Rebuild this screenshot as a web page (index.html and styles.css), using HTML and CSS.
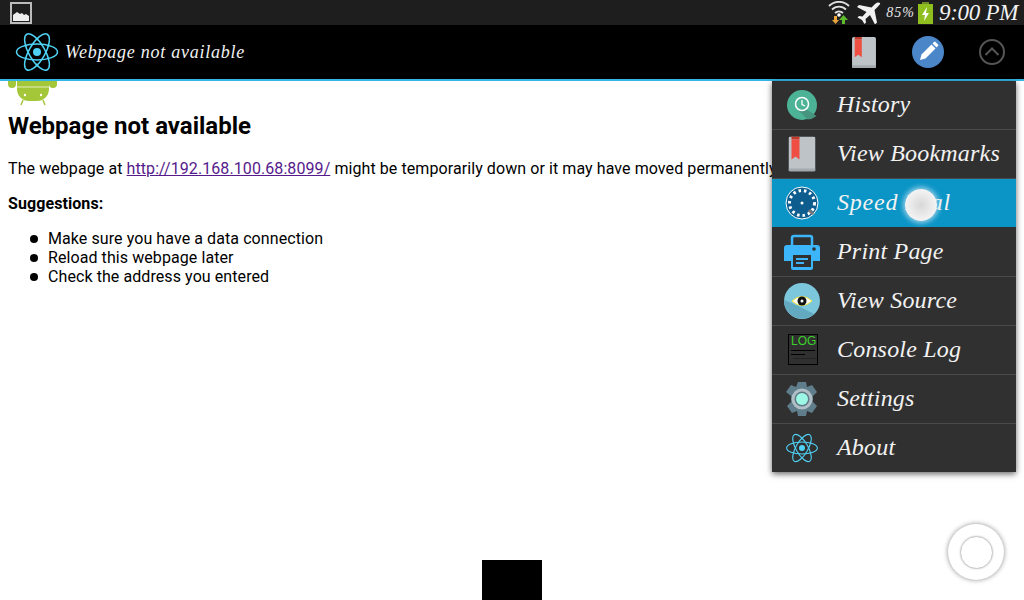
FILE: index.html
```html
<!DOCTYPE html>
<html lang="en">
<head>
<meta charset="utf-8">
<title>Webpage not available</title>
<link rel="stylesheet" href="styles.css">
</head>
<body>
<svg class="defs" width="0" height="0" aria-hidden="true">
  <symbol id="atom" viewBox="0 0 44 40">
    <g fill="none" stroke="#4fd2f5" stroke-width="1.5">
      <ellipse cx="22" cy="20" rx="20.5" ry="8"/>
      <ellipse cx="22" cy="20" rx="20.5" ry="8" transform="rotate(60 22 20)"/>
      <ellipse cx="22" cy="20" rx="20.5" ry="8" transform="rotate(120 22 20)"/>
    </g>
    <circle cx="22" cy="20" r="4" fill="#4fd2f5"/>
  </symbol>
  <symbol id="book" viewBox="0 0 27 35">
    <rect x="0" y="0" width="27" height="35" rx="2" fill="#bdc3c7"/>
    <rect x="0" y="32" width="27" height="3" rx="1" fill="#a3a9ad"/>
    <path d="M3 0h8v3H3z" fill="#c0392b"/>
    <path d="M3 3h8v20l-4-3-4 3z" fill="#ef4f42"/>
  </symbol>
</svg>

<header class="status">
  <svg class="pic" width="22" height="22" viewBox="0 0 22 22"><rect x="1" y="1" width="20" height="20" fill="none" stroke="#bbb" stroke-width="2"/><path d="M3 19v-6l4-3 3 2 2-1 2 2 2-1 3 2v5z" fill="#eee"/></svg>
  <span class="spring"></span>
  <svg width="22" height="24" viewBox="0 0 22 24"><g fill="none" stroke="#e0e0e0" stroke-width="1.800"><path d="M1 5a14 14 0 0 1 20 0"/><path d="M4 8.500a10 10 0 0 1 14 0"/><path d="M7 12a6 6 0 0 1 8 0"/></g><circle cx="11" cy="14" r="1.800" fill="#fff"/><path d="M6 15h3v4h2l-3.500 4L4 19h2z" fill="#e8a33b"/><path d="M14 19h3v4h-3zM15.500 14L20 19h-9z" fill="#5dbb2c"/></svg>
  <svg class="plane" width="25" height="22" viewBox="0 0 25 22"><path d="M24 1c-1.500-1-3.500-.5-5 1l-3.500 3.500L3 3 1 5l9.500 5-4 4.500L3 14l-1.500 1.500 4.500 2.500 2.500 4L10 20.500 9.500 17l4.500-4 5 9.500 2-2L18.500 8 22 4.500c1.500-1.500 2.500-2.500 2-3.500z" fill="#f2f2f2"/></svg>
  <span class="pct">85%</span>
  <svg class="batt" width="15" height="22" viewBox="0 0 15 22"><rect x="4" y="0" width="7" height="3" fill="#6f8f2a"/><rect y="2" width="15" height="20" fill="#8fbf1f"/><path d="M9 5L4 13h3l-1 6 5-8H8z" fill="#fff"/></svg>
  <span class="clock">9:00 PM</span>
</header>

<nav class="bar">
  <svg class="bar-logo" width="44" height="40"><use href="#atom"/></svg>
  <span class="bar-title">Webpage not available</span>
  <span class="spring"></span>
  <svg class="bar-book" width="24" height="31"><use href="#book"/></svg>
  <svg class="bar-pen" width="32" height="32" viewBox="0 0 32 32"><circle cx="16" cy="16" r="16" fill="#4a86c8"/><path d="M8 24l1.500-5.500L19.500 8.500l4 4-10 10z" fill="#fff"/><path d="M20.500 7.500l1.500-1.500a1 1 0 0 1 1.500 0l2.500 2.500a1 1 0 0 1 0 1.500l-1.500 1.500z" fill="#fff"/></svg>
  <svg class="bar-up" width="26" height="26" viewBox="0 0 26 26"><circle cx="13" cy="13" r="12" fill="none" stroke="#555" stroke-width="2"/><path d="M6.500 16L13 9.500 19.500 16" fill="none" stroke="#555" stroke-width="2"/></svg>
</nav>

<main class="page">
  <svg class="droid" width="50" height="25" viewBox="0 0 50 25">
    <path d="M0 0h8v3a4 4 0 0 1-8 0zM41 0h8v3a4 4 0 0 1-8 0z" fill="#a4c639"/>
    <path d="M9 0h32v8a12 12 0 0 1-12 12h-8a12 12 0 0 1-12-12z" fill="#a4c639"/>
    <path d="M9 6h32" stroke="#e4eec0" stroke-width="1"/>
    <path d="M15 19l-2 5M35 19l2 5" stroke="#a4c639" stroke-width="1.500"/>
    <circle cx="17" cy="14" r="1.200" fill="#fff"/><circle cx="33" cy="14" r="1.200" fill="#fff"/>
  </svg>
  <h1>Webpage not available</h1>
  <p>The webpage at <a href="#">http://192.168.100.68:8099/</a> might be temporarily down or it may have moved permanently</p>
  <p><b>Suggestions:</b></p>
  <ul>
    <li>Make sure you have a data connection</li>
    <li>Reload this webpage later</li>
    <li>Check the address you entered</li>
  </ul>
</main>

<div class="menu">
  <div class="row">
    <svg class="ico" width="32" height="32" viewBox="0 0 32 32"><circle cx="16" cy="16" r="15" fill="#4db397"/><path d="M20 20l10.500 7a15 15 0 0 1-9 3.500L12 21z" fill="#46957f"/><circle cx="16" cy="15" r="6.500" fill="none" stroke="#fff" stroke-width="1.500"/><path d="M16 11v4.500l3 1.500" fill="none" stroke="#fff" stroke-width="1.300"/></svg>
    <span>History</span>
  </div>
  <div class="row">
    <svg class="ico" width="27" height="35"><use href="#book"/></svg>
    <span>View Bookmarks</span>
  </div>
  <div class="row on">
    <svg class="ico" width="34" height="34" viewBox="0 0 34 34"><circle cx="17" cy="17" r="16" fill="#0d5d8f" stroke="#fff" stroke-width="1"/><circle cx="17" cy="17" r="12.500" fill="none" stroke="#fff" stroke-width="3" stroke-dasharray="2.500 3"/><circle cx="17" cy="17" r="1.500" fill="#fff"/><path d="M24 24l4 4" stroke="#777" stroke-width="3"/></svg>
    <span>Speed Dial</span>
  </div>
  <div class="row">
    <svg class="ico" width="36" height="36" viewBox="0 0 36 36"><path d="M8 12V4a2 2 0 0 1 2-2h16a2 2 0 0 1 2 2v8" fill="none" stroke="#3db5fb" stroke-width="2.500"/><path d="M3 11h30a3 3 0 0 1 3 3v13h-7v7a2 2 0 0 1-2 2H9a2 2 0 0 1-2-2v-7H0V14a3 3 0 0 1 3-3z" fill="#3db5fb"/><rect x="9" y="21" width="18" height="12" fill="#303030"/><path d="M12 25h12M12 29h8" stroke="#3db5fb" stroke-width="2"/><circle cx="30" cy="15" r="1.800" fill="#303030"/></svg>
    <span>Print Page</span>
  </div>
  <div class="row">
    <svg class="ico" width="36" height="36" viewBox="0 0 36 36"><circle cx="18" cy="18" r="18" fill="#7dc7dc"/><path d="M12 22L0.200 17a18 18 0 0 0 30 14z" fill="#63a9bf"/><path d="M8 18q10-9 20 0q-10 9-20 0z" fill="#fff" stroke="#f2e33a" stroke-width="1"/><circle cx="18" cy="18" r="4.500" fill="#111"/><circle cx="18" cy="18" r="1.500" fill="#fff"/></svg>
    <span>View Source</span>
  </div>
  <div class="row">
    <div class="log">
      <b>LOG</b>
      <i class="l1"></i><i class="l2"></i><i class="l3"></i>
    </div>
    <span>Console Log</span>
  </div>
  <div class="row">
    <svg class="ico" width="34" height="34" viewBox="0 0 34 34"><path d="M13 0h8l1 5 5-2 5 7-4 4v6l4 4-5 7-5-2-1 5h-8l-1-5-5 2-5-7 4-4v-6L1 10l5-7 5 2z" fill="#607d8b"/><circle cx="17" cy="17" r="10.500" fill="#b0bec5"/><circle cx="17" cy="17" r="7.500" fill="#5f7a87"/><circle cx="17" cy="17" r="6" fill="#9cf7e4"/></svg>
    <span>Settings</span>
  </div>
  <div class="row">
    <svg class="ico" width="33" height="30"><use href="#atom"/></svg>
    <span>About</span>
  </div>
</div>

<div class="touch"></div>
<div class="home"></div>
<div class="fab"><div class="fab-in"></div></div>
</body>
</html>
```
FILE: styles.css
```css
* { box-sizing: border-box; }
html, body { margin: 0; height: 100%; overflow: hidden; background: #fff; }
body { font-family: Roboto, "Liberation Sans", Arial, sans-serif; font-size: 16px; letter-spacing: .08px; color: #000; position: relative; }
.defs { position: absolute; }
.spring { flex: 1; }

.status { height: 25px; background: #1e1e1e; display: flex; align-items: center; padding: 0 6px 0 10px; }
.plane { margin-left: 6px; }
.pct { font: italic 14px "Liberation Serif", serif; color: #e8e8e8; margin-left: 5px; letter-spacing: 1px; }
.batt { margin-left: 3px; }
.clock { font: italic 23px/25px "Liberation Serif", serif; color: #f2f2f2; margin-left: 6px; letter-spacing: -.3px; }

.bar { height: 56px; background: #000; border-bottom: 2px solid #33b5e5; display: flex; align-items: center; padding: 0 19px 0 15px; }
.bar-logo { flex: none; }
.bar-title { font: italic 18px "Liberation Serif", serif; color: #f2f2f2; margin-left: 6px; letter-spacing: .75px; }
.bar-book { margin-right: 36px; }
.bar-pen { margin-right: 35px; }

.page { padding: 0 8px; }
.droid { display: block; }
h1 { font-size: 24px; line-height: 28px; letter-spacing: 0; margin: 6px 0 19px; white-space: nowrap; }
p { margin: 0 0 16px; white-space: nowrap; }
a { color: #551a8b; }
ul { margin: 0; padding-left: 40px; list-style: none; }
li { position: relative; }
li::before { content: ""; position: absolute; left: -18px; top: 6px; width: 8px; height: 8px; border-radius: 50%; background: #000; }

.menu { position: absolute; left: 772px; top: 81px; width: 244px; background: #303030; box-shadow: 0 2px 6px rgba(0,0,0,.6); }
.row { height: 49px; display: flex; align-items: center; position: relative; border-bottom: 1px solid #4a4a4a; color: #f2f2f2; font: italic 24px "Liberation Serif", serif; letter-spacing: .2px; }
.row:last-child { border-bottom: 0; height: 48px; }
.row.on { background: #0a95c6; border-bottom-color: #303030; letter-spacing: .8px; }
.row span { position: absolute; left: 65px; top: 50%; transform: translateY(-50%); margin-top: -1px; white-space: nowrap; }
.ico { position: absolute; left: 30px; top: 50%; transform: translate(-50%, -50%); }
.log { position: absolute; left: 16px; top: 8px; width: 30px; height: 31px; border: 1px solid #000; font-style: normal; padding: 1px 2px; }
.log b { display: block; font: 400 12px/11px "Liberation Sans", sans-serif; color: #3bd12a; letter-spacing: 0; }
.log i { display: block; height: 1px; background: #000; margin-top: 3px; }
.log .l2 { width: 14px; }
.log .l3 { width: 24px; margin-left: 2px; background: #222; }

.touch { position: absolute; left: 905px; top: 189px; width: 32px; height: 32px; border-radius: 50%; background: radial-gradient(circle, #d8d8d8 0, #f4f4f4 70%, #fff 100%); box-shadow: 0 0 5px 2px rgba(210,230,245,.7); }
.home { position: absolute; left: 482px; top: 560px; width: 60px; height: 40px; background: #000; }
.fab { position: absolute; left: 948px; top: 524px; width: 56px; height: 56px; border-radius: 50%; background: #fff; box-shadow: 0 0 5px rgba(0,0,0,.45); display: flex; align-items: center; justify-content: center; }
.fab-in { width: 33px; height: 33px; border-radius: 50%; background: #fff; border: 1px solid #c8c8c8; box-shadow: 0 0 2px rgba(0,0,0,.2); }
```
